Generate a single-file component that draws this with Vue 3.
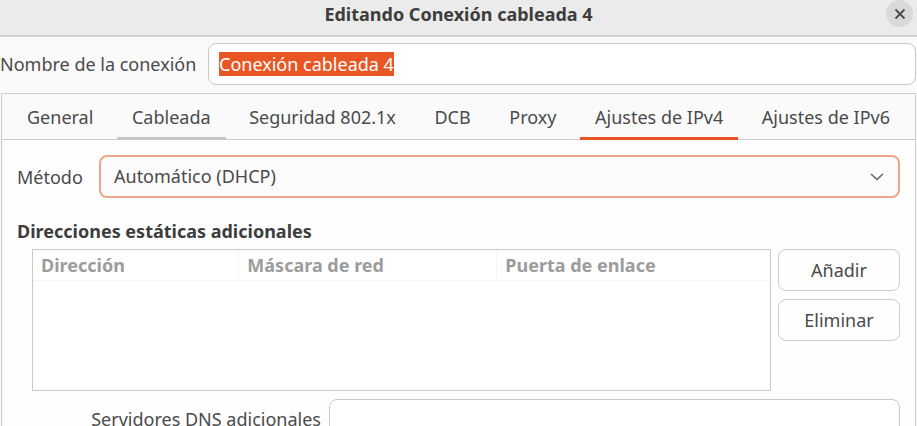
<script setup>
import { onMounted, ref } from 'vue'

const name = ref('Conexión cableada 4')
const nameInput = ref(null)
const method = ref('auto')
const dns = ref('')
const active = ref('ipv4')

const tabs = [
  { id: 'general', label: 'General' },
  { id: 'wired', label: 'Cableada', hover: true },
  { id: 'security', label: 'Seguridad 802.1x' },
  { id: 'dcb', label: 'DCB' },
  { id: 'proxy', label: 'Proxy' },
  { id: 'ipv4', label: 'Ajustes de IPv4' },
  { id: 'ipv6', label: 'Ajustes de IPv6' },
]

onMounted(() => {
  nameInput.value.focus()
  nameInput.value.select()
})
</script>

<template>
  <div class="dialog">
    <header class="titlebar">
      <h1 class="title">Editando Conexión cableada 4</h1>
      <button class="close" type="button" aria-label="Cerrar">
        <svg width="12" height="12" viewBox="0 0 12 12" aria-hidden="true">
          <path d="M1.5 1.5 10.5 10.5M10.5 1.5 1.5 10.5" fill="none" stroke="#4a4a4a" stroke-width="1.8" />
        </svg>
      </button>
    </header>

    <div class="name-row">
      <label for="name">Nombre de la conexión</label>
      <input id="name" ref="nameInput" v-model="name" class="field" type="text" spellcheck="false" />
    </div>

    <section class="notebook">
      <div class="tabs" role="tablist">
        <button
          v-for="tab in tabs"
          :key="tab.id"
          class="tab"
          :class="{ active: active === tab.id, hover: tab.hover }"
          type="button"
          role="tab"
          :aria-selected="active === tab.id"
          @click="active = tab.id"
        >{{ tab.label }}</button>
      </div>

      <div class="page">
        <div class="method-row">
          <label for="method">Método</label>
          <div class="combo">
            <select id="method" v-model="method">
              <option value="auto">Automático (DHCP)</option>
            </select>
            <svg class="chevron" width="14" height="8" viewBox="0 0 14 8" aria-hidden="true">
              <path d="M1 1 7 6.5 13 1" fill="none" stroke="#666" stroke-width="1.6" />
            </svg>
          </div>
        </div>

        <h2 class="heading">Direcciones estáticas adicionales</h2>

        <div class="addresses">
          <div class="list">
            <table>
              <thead>
                <tr>
                  <th class="col-address">Dirección</th>
                  <th class="col-mask">Máscara de red</th>
                  <th>Puerta de enlace</th>
                </tr>
              </thead>
            </table>
          </div>
          <div class="actions">
            <button class="push" type="button">Añadir</button>
            <button class="push" type="button">Eliminar</button>
          </div>
        </div>

        <div class="dns-row">
          <label for="dns">Servidores DNS adicionales</label>
          <input id="dns" v-model="dns" class="field" type="text" />
        </div>
      </div>
    </section>
  </div>
</template>

<style>
body {
  margin: 0;
}
</style>

<style scoped>
.dialog {
  box-sizing: border-box;
  display: flex;
  flex-direction: column;
  height: 100vh;
  overflow: hidden;
  background: #fafafa;
  color: #4a4a4a;
  font-family: "Noto Sans", sans-serif;
  font-size: 18px;
  line-height: 20px;
}

.dialog * {
  box-sizing: border-box;
}

button,
input,
select {
  margin: 0;
  color: inherit;
  font: inherit;
}

label {
  white-space: nowrap;
}

.titlebar {
  display: grid;
  grid-template-columns: 1fr auto 1fr;
  flex: none;
  height: 37px;
  padding: 0 4px 10px;
  align-items: center;
  border-bottom: 2px solid #d2d2d2;
  background: #ebebeb;
}

.title {
  grid-column: 2;
  margin: 0;
  color: #3d3d3d;
  font-size: 18px;
  font-weight: 700;
}

.close {
  display: flex;
  justify-self: end;
  align-items: center;
  justify-content: center;
  width: 27px;
  height: 27px;
  padding: 0;
  border: 0;
  border-radius: 50%;
  background: #d9d9d9;
}

.name-row {
  display: flex;
  flex: none;
  align-items: center;
  padding: 6px 1px 8px 0;
}

.name-row label {
  flex: none;
  width: 208px;
}

.field {
  flex: 1;
  min-width: 0;
  height: 42px;
  padding: 0 10px;
  border: 1px solid #c9c9c9;
  border-radius: 8px;
  outline: none;
  background: #fff;
}

.field::selection {
  background: rgba(233, 84, 32, 0.99);
  color: #fff;
}

.notebook {
  flex: none;
  margin: 0 1px;
  border: 1px solid #cdcdcd;
  background: #fefefe;
}

.tabs {
  display: flex;
  justify-content: space-between;
  height: 46px;
  padding: 0 10px;
  border-bottom: 1px solid #cdcdcd;
  background: #fafafa;
}

.tab {
  height: 46px;
  padding: 2px 15px 0;
  border: 0;
  border-bottom: 3px solid transparent;
  background: none;
  white-space: nowrap;
}

.tab.hover {
  border-bottom-color: #c6c6c6;
}

.tab.active {
  border-bottom-color: #e95420;
}

.page {
  padding: 15px 15px 0;
}

.method-row {
  display: flex;
  align-items: center;
}

.method-row label {
  flex: none;
  width: 82px;
}

.combo {
  position: relative;
  flex: 1;
}

.combo select {
  display: block;
  width: 100%;
  height: 43px;
  padding: 0 40px 1px 13px;
  border: 2px solid #f0a58b;
  border-radius: 8px;
  outline: none;
  background: #fcfcfc;
  appearance: none;
}

.chevron {
  position: absolute;
  top: 18px;
  right: 16px;
  pointer-events: none;
}

.heading {
  margin: 23px 0 8px;
  color: #3d3d3d;
  font-size: 18px;
  font-weight: 700;
}

.addresses {
  display: flex;
  gap: 7px;
  padding-left: 15px;
}

.list {
  flex: 1;
  height: 142px;
  border: 1px solid #c9c9c9;
  background: #fff;
}

table {
  width: 100%;
  border-collapse: separate;
  border-spacing: 0;
  table-layout: fixed;
}

th {
  height: 31px;
  padding: 0 8px;
  border-right: 1px solid #f5f5f5;
  border-bottom: 1px solid #f5f5f5;
  color: #9c9c9c;
  font-weight: 700;
  text-align: left;
}

th:last-child {
  border-right: 0;
}

.col-address {
  width: 28%;
}

.col-mask {
  width: 35%;
}

.actions {
  display: flex;
  flex: none;
  flex-direction: column;
  gap: 8px;
  width: 122px;
}

.push {
  height: 42px;
  padding: 0 0 1px;
  border: 1px solid #cdcdcd;
  border-radius: 8px;
  background: #fefefe;
}

.dns-row {
  display: flex;
  gap: 8px;
  align-items: center;
  padding: 8px 0 15px;
}

.dns-row label {
  flex: none;
  width: 304px;
  padding-bottom: 2px;
  text-align: right;
}
</style>
